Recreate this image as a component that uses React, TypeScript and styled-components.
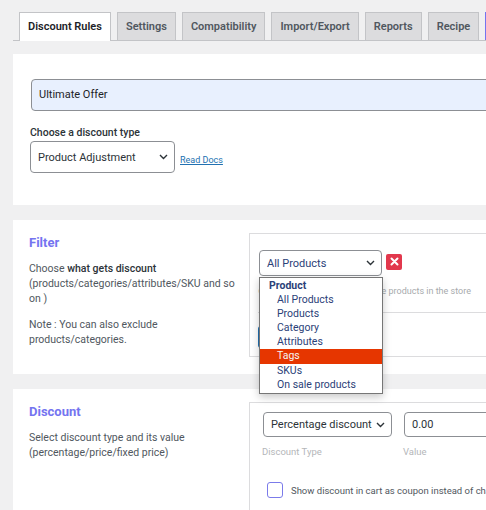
import React from "react";
import styled, { createGlobalStyle } from "styled-components";

const Global = createGlobalStyle`
  html, body { margin: 0; padding: 0; background: #f0f0f1; overflow: hidden; }
  body { font-family: Roboto, "Liberation Sans", Arial, sans-serif; color: #50575e; }
  * { box-sizing: border-box; }
`;

const Page = styled.div`
  width: 1000px;
  padding: 12px 0 0 13px;
`;

const TabBar = styled.nav`
  display: flex;
  align-items: flex-end;
  gap: 6px;
  height: 29px;
  padding-left: 6px;
  border-bottom: 1px solid #c3c4c7;
`;

const Tab = styled.div<{ $active?: boolean; $accent?: boolean }>`
  height: ${(p) => (p.$active ? "29px" : "28px")};
  margin-bottom: ${(p) => (p.$active ? "-1px" : "0")};
  padding: 0 8px;
  border: 1px solid ${(p) => (p.$accent ? "#7474f0" : "#c3c4c7")};
  border-bottom: none;
  background: ${(p) => (p.$active ? "#fff" : p.$accent ? "#e6e6f6" : "#dcdcde")};
  color: ${(p) => (p.$active ? "#1d2327" : "#50575e")};
  font-size: 11px;
  font-weight: 600;
  line-height: 27px;
  white-space: nowrap;
`;

const Panel = styled.section`
  background: #fff;
  margin-bottom: 15px;
`;

const TopPanel = styled(Panel)`
  margin-top: 13px;
  padding: 25px 18px 32px 17px;
`;

const TitleInput = styled.div`
  height: 32px;
  width: 900px;
  margin-left: 1px;
  border: 1px solid #8c8f94;
  border-radius: 4px;
  background: #e8f0fe;
  color: #1d2327;
  font-size: 11px;
  line-height: 30px;
  padding-left: 7px;
`;

const FieldLabel = styled.div`
  margin-top: 15px;
  font-size: 10.5px;
  font-weight: 500;
  line-height: 14px;
  color: #2c3338;
`;

const SelectRow = styled.div`
  display: flex;
  align-items: center;
  margin-top: 1px;
`;

const Select = styled.div<{ $w: number; $h: number; $navy?: boolean }>`
  width: ${(p) => p.$w}px;
  height: ${(p) => p.$h}px;
  border: 1px solid #8c8f94;
  border-radius: 4px;
  background: #fff;
  display: flex;
  align-items: center;
  justify-content: space-between;
  padding: 0 6px 0 7px;
  font-size: 11px;
  color: ${(p) => (p.$navy ? "#2b4178" : "#2c3338")};
  white-space: nowrap;
`;

const DocLink = styled.a`
  margin: 5px 0 0 5px;
  font-size: 9px;
  color: #2271b1;
  text-decoration: underline;
`;

const SplitPanel = styled(Panel)`
  display: grid;
  grid-template-columns: 236px 1fr;
`;

const Side = styled.div`
  padding: 15px 16px;
`;

const SideTitle = styled.h3`
  margin: 0;
  font-size: 13px;
  line-height: 16px;
  font-weight: 700;
  color: #7474f0;
`;

const SideText = styled.p`
  margin: 9.5px 0 0;
  font-size: 10.5px;
  line-height: 15px;
  color: #50575e;
  white-space: nowrap;
  & + & { margin-top: 11px; }
  b { font-weight: 500; color: #2c3338; }
`;

const Main = styled.div<{ $pb: number }>`
  padding: 13px 0 ${(p) => p.$pb}px 0;
`;

const Box = styled.div<{ $pad: string }>`
  border: 1px solid #dcdcde;
  padding: ${(p) => p.$pad};
`;

const FilterRow = styled.div`
  display: flex;
  align-items: center;
  gap: 4px;
  margin-left: 1px;
`;

const SelectWrap = styled.div`
  position: relative;
`;

const RemoveBtn = styled.div`
  width: 16px;
  height: 16px;
  border-radius: 2px;
  background: #e2384d;
  display: flex;
  align-items: center;
  justify-content: center;
  margin-top: -3px;
`;

const Dropdown = styled.ul`
  position: absolute;
  top: calc(100% + 1px);
  left: 0;
  width: 124px;
  margin: 0;
  padding: 1px 0;
  list-style: none;
  background: #fff;
  border: 1px solid #767676;
  box-shadow: 0 3px 8px rgba(0, 0, 0, 0.22);
  z-index: 10;
`;

const Option = styled.li<{ $group?: boolean; $selected?: boolean }>`
  height: 14.1px;
  line-height: 14px;
  font-size: 10.5px;
  padding-left: ${(p) => (p.$group ? "9px" : "17px")};
  font-weight: ${(p) => (p.$group ? 700 : 400)};
  background: ${(p) => (p.$selected ? "#e63600" : "transparent")};
  color: ${(p) => (p.$selected ? "#f4f4f4" : "#2b4178")};
  white-space: nowrap;
`;

const Hint = styled.div`
  margin-top: 9px;
  display: flex;
  align-items: center;
  gap: 0;
  font-size: 9px;
  line-height: 12px;
  color: #a7aaad;
  white-space: nowrap;
`;

const Divider = styled.div`
  margin-top: 15px;
  height: 1px;
  background: #dcdcde;
`;

const AddButton = styled.div`
  margin-top: 13px;
  display: inline-flex;
  align-items: center;
  height: 22px;
  padding: 0 10px;
  border-radius: 3px;
  background: #2271b1;
  color: #fff;
  font-size: 10px;
`;

const Fields = styled.div`
  display: flex;
  gap: 12px;
`;

const FieldCol = styled.div`
  display: flex;
  flex-direction: column;
`;

const ValueInput = styled.div`
  width: 160px;
  height: 25px;
  border: 1px solid #8c8f94;
  border-radius: 4px;
  padding-left: 7px;
  font-size: 11px;
  line-height: 23px;
  color: #2c3338;
`;

const SubLabel = styled.div`
  margin-top: 9px;
  margin-left: -1px;
  font-size: 9.5px;
  line-height: 12px;
  color: #b4b6b9;
`;

const CheckRow = styled.div`
  margin: 24px 0 0 4px;
  display: flex;
  align-items: center;
  gap: 8px;
  font-size: 9.5px;
  color: #50575e;
  white-space: nowrap;
`;

const CheckBox = styled.div`
  width: 16px;
  height: 16px;
  border: 1px solid #7b7bea;
  border-radius: 3px;
  background: #fff;
`;

const Chevron = () => (
  <svg width="9" height="6" viewBox="0 0 9 6" fill="none">
    <polyline points="1,1 4.5,4.5 8,1" stroke="#2c3338" strokeWidth="1.4" />
  </svg>
);

const tabs = ["Discount Rules", "Settings", "Compatibility", "Import/Export", "Reports", "Recipe"];
const options = ["All Products", "Products", "Category", "Attributes", "Tags", "SKUs", "On sale products"];

export default function App() {
  return (
    <>
      <Global />
      <Page>
        <TabBar>
          {tabs.map((t, i) => (
            <Tab key={t} $active={i === 0}>
              {t}
            </Tab>
          ))}
          <Tab $accent>Go Pro</Tab>
        </TabBar>

        <TopPanel>
          <TitleInput>Ultimate Offer</TitleInput>
          <FieldLabel>Choose a discount type</FieldLabel>
          <SelectRow>
            <Select $w={145} $h={32}>
              Product Adjustment
              <Chevron />
            </Select>
            <DocLink href="#">Read Docs</DocLink>
          </SelectRow>
        </TopPanel>

        <SplitPanel>
          <Side>
            <SideTitle>Filter</SideTitle>
            <SideText>
              Choose <b>what gets discount</b>
              <br />
              (products/categories/attributes/SKU and so
              <br />
              on )
            </SideText>
            <SideText>
              Note : You can also exclude
              <br />
              products/categories.
            </SideText>
          </Side>
          <Main $pb={17}>
            <Box $pad="16px 0 8px 8px">
              <FilterRow>
                <SelectWrap>
                  <Select $w={123} $h={26} $navy>
                    All Products
                    <Chevron />
                  </Select>
                  <Dropdown>
                    <Option $group>Product</Option>
                    {options.map((o) => (
                      <Option key={o} $selected={o === "Tags"}>
                        {o}
                      </Option>
                    ))}
                  </Dropdown>
                </SelectWrap>
                <RemoveBtn>
                  <svg width="9" height="9" viewBox="0 0 9 9">
                    <path d="M1.5 1.5 L7.5 7.5 M7.5 1.5 L1.5 7.5" stroke="#fff" strokeWidth="2" strokeLinecap="round" />
                  </svg>
                </RemoveBtn>
              </FilterRow>
              <Hint>
                <svg width="8" height="8" viewBox="0 0 8 8">
                  <circle cx="4" cy="4" r="3.5" fill="#f3cf8f" />
                </svg>
                Discount rule applies to all the products in the store
              </Hint>
              <Divider />
              <AddButton>Add filter</AddButton>
            </Box>
          </Main>
        </SplitPanel>

        <SplitPanel>
          <Side>
            <SideTitle>Discount</SideTitle>
            <SideText>
              Select discount type and its value
              <br />
              (percentage/price/fixed price)
            </SideText>
          </Side>
          <Main $pb={20}>
            <Box $pad="9px 13px 20px">
              <Fields>
                <FieldCol>
                  <Select $w={129} $h={25}>
                    Percentage discount
                    <Chevron />
                  </Select>
                  <SubLabel>Discount Type</SubLabel>
                </FieldCol>
                <FieldCol>
                  <ValueInput>0.00</ValueInput>
                  <SubLabel>Value</SubLabel>
                </FieldCol>
              </Fields>
              <CheckRow>
                <CheckBox />
                Show discount in cart as coupon instead of changing the product price
              </CheckRow>
            </Box>
          </Main>
        </SplitPanel>
      </Page>
    </>
  );
}
